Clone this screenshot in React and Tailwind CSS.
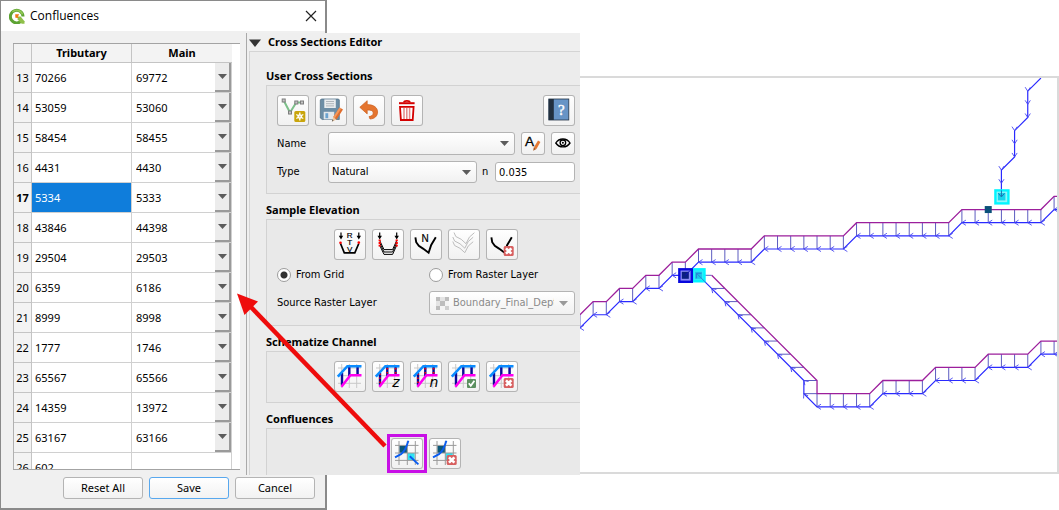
import React from "react";

const ROWS = [
  [13, "70266", "69772"],
  [14, "53059", "53060"],
  [15, "58454", "58455"],
  [16, "4431", "4430"],
  [17, "5334", "5333"],
  [18, "43846", "44398"],
  [19, "29504", "29503"],
  [20, "6359", "6186"],
  [21, "8999", "8998"],
  [22, "1777", "1746"],
  [23, "65567", "65566"],
  [24, "14359", "13972"],
  [25, "63167", "63166"],
  [26, "602", ""],
];

/* ---------- icons, drawn on a 32 x 31 tool button ---------- */

function Icon({ children }) {
  return (
    <svg viewBox="0 0 32 31" className="h-[31px] w-8" aria-hidden="true">
      {children}
    </svg>
  );
}

function Pencil() {
  return (
    <g>
      <path d="M24.5 12.5l3.5 2-6.5 10-3.4-2.2z" fill="#e06c2c" />
      <path d="M24.5 12.5l1.8 1-6.6 10-1.6-1.2z" fill="#f2985c" />
      <path d="M18.1 22.3l3.4 2.2-4.5 2.2z" fill="#f0c9a0" />
      <path d="M17.6 24.6l1 .7-1.8 1.5z" fill="#444" />
    </g>
  );
}

function CrossBadge() {
  return (
    <g>
      <rect x="17.7" y="17" width="10" height="10" rx="1.5" fill="#d75f5f" />
      <path d="M20 19.3l5.4 5.4M25.4 19.3L20 24.7" stroke="#fff" strokeWidth="2.6" />
    </g>
  );
}

const AddLine = () => (
  <Icon>
    <path d="M6.7 5.5L13 17.5L19.3 7.5H25" fill="none" stroke="#7cc08a" strokeWidth="2" />
    {[[6.7, 5.5], [13, 17.5], [19.3, 7.5], [25, 7.5]].map(([x, y]) => (
      <rect key={x} x={x - 1.5} y={y - 1.5} width="3" height="3" fill="#c4c4c4" stroke="#7d7d7d" strokeWidth="1" />
    ))}
    <rect x="17.3" y="16" width="11" height="11" rx="1.5" fill="#c9a50c" />
    <path d="M22.8 17.5v8M19.3 19.5l7 4M26.3 19.5l-7 4" stroke="#fff" strokeWidth="1.3" />
    <circle cx="22.8" cy="21.5" r="2.3" fill="#fff" />
    <circle cx="22.8" cy="21.5" r="1" fill="#e8d27a" />
  </Icon>
);

const Save = () => (
  <Icon>
    <path d="M6.3 4h17.2l.8 1v19.5h-17L5.3 23V5z" fill="#6c8da5" stroke="#557388" strokeWidth=".8" />
    <rect x="9.3" y="4.4" width="11.5" height="8.6" fill="#e9ecee" />
    <path d="M11 6.5h8M11 8.7h8M11 10.9h8" stroke="#a9b0b5" strokeWidth=".9" />
    <rect x="8.7" y="16.8" width="10.5" height="7.6" fill="#e3e7ea" />
    <rect x="10.4" y="18.2" width="2.8" height="5" fill="#6ba2cf" />
    <Pencil />
  </Icon>
);

const Undo = () => (
  <Icon>
    <path
      d="M6.8 12.3L14.2 5.7V9.6C20.8 9.6 24.6 12.6 24.6 17C24.6 21 21.6 23.8 17 24L16 21.6C19 21.2 20.4 19.8 20.2 17.8C20 15.6 18 14.9 14.2 15V18.9Z"
      fill="#e5752f" stroke="#cc5f1e" strokeWidth=".7"
    />
  </Icon>
);

const Trash = () => (
  <Icon>
    <path d="M8 8.2h15.6" stroke="#d40000" strokeWidth="2" />
    <path d="M12.8 7.4c.4-2 5.8-2 6.2 0" fill="none" stroke="#d40000" strokeWidth="1.6" />
    <path d="M9 11.8h13.6l-.9 13.2h-11.8z" fill="#fff" stroke="#d40000" strokeWidth="1.8" />
    <path d="M13 13v11M15.8 13v11M18.6 13v11" stroke="#e38a8a" strokeWidth="1.5" />
  </Icon>
);

const Book = () => (
  <Icon>
    <rect x="5.8" y="4" width="20" height="21" fill="#6794c6" stroke="#243447" strokeWidth=".8" />
    <rect x="5.8" y="4" width="5" height="21" fill="#22303f" />
    <text x="18.4" y="19.5" textAnchor="middle" fontSize="15" fontFamily="Liberation Serif, serif" fill="#fff" stroke="#fff" strokeWidth=".4">?</text>
  </Icon>
);

function DownArrow({ x }) {
  return (
    <g>
      <path d={`M${x} 3.5v5`} stroke="#000" strokeWidth="1.2" />
      <path d={`M${x - 2.2} 6.8h4.4l-2.2 3.6z`} fill="#000" />
    </g>
  );
}

const Rtv = () => (
  <Icon>
    <DownArrow x={7} />
    <DownArrow x={24.8} />
    <path d="M6.5 14.5L10.3 23.8H20.8L24.8 14.5" fill="none" stroke="#000" strokeWidth="1.7" />
    <circle cx="6.5" cy="13.8" r="1.3" fill="#f00" />
    <circle cx="24.8" cy="13.6" r="1.3" fill="#f00" />
    <text fontFamily="Liberation Sans, sans-serif" fontSize="8" textAnchor="middle" stroke="#000" strokeWidth=".2">
      <tspan x="15.6" y="9">R</tspan>
      <tspan x="15.6" y="16">T</tspan>
      <tspan x="15.6" y="22.8">V</tspan>
    </text>
  </Icon>
);

const Stacked = () => (
  <Icon>
    <DownArrow x={7.7} />
    <DownArrow x={24.7} />
    {[0, 2.4, 4.8].map((d) => (
      <path key={d} d={`M7.7 ${11.5 + d}L12 ${20.6 + d}H20.6L24.7 ${11.5 + d}`} fill="none" stroke="#000" strokeWidth="1" />
    ))}
    <path d="M7.7 10.5v7.5M24.7 10.5v7.5" stroke="#f00" strokeWidth="2.2" strokeDasharray="1.8 .8" />
  </Icon>
);

const NaturalN = () => (
  <Icon>
    <path d="M5.4 8.3L6.2 13.2L8.8 16.8L13 19.6L18.6 23.8L21.2 16L25.8 8.3" fill="none" stroke="#000" strokeWidth="1.9" />
    <text x="15.2" y="13" textAnchor="middle" fontFamily="Liberation Sans, sans-serif" fontSize="10" stroke="#000" strokeWidth=".2">N</text>
  </Icon>
);

const Interpolate = () => (
  <Icon>
    {[[6, 0], [4.8, 4.5], [4.8, 9]].map(([x, d]) => (
      <path key={d} d={`M${x} ${3.5 + d}l1.8 4l5.4 2.8l4.8 4.4l3.4 -6.6l5 -4.4`} fill="none" stroke="#bdbdbd" strokeWidth="1" />
    ))}
  </Icon>
);

const RemoveSection = () => (
  <Icon>
    <path d="M5.4 8.3L6.2 13.2L8.8 16.8L13 19.6L18.6 23.8L21.2 16L25.8 8.3" fill="none" stroke="#000" strokeWidth="1.9" />
    <CrossBadge />
  </Icon>
);

function Channel({ dots, letter, children }) {
  return (
    <Icon>
      <path d="M7.7 3v24M15.3 3v24M22.7 3v24M4 7h23M4 14.7h23M4 22.3h23" stroke="#c9c9c9" strokeWidth="1" />
      <path d="M8 12v12M15.3 6v9M23.6 6v8" stroke="#0a0a96" strokeWidth="2.4" />
      {dots && <path d="M8 12.5v10M15.3 7v7.5M23.6 7v7" stroke="#f00" strokeWidth="1.6" strokeDasharray="1.6 2.4" />}
      <path d="M3.8 15.6L13.4 5.2H27.5" fill="none" stroke="#0b8cff" strokeWidth="2.6" />
      <path d="M7.4 25.8L16.4 14.2H27.5" fill="none" stroke="#ff00f0" strokeWidth="2.6" />
      {letter && (
        <text x="24" y="26" textAnchor="middle" fontFamily="DejaVu Sans, sans-serif" fontStyle="italic" fontSize="14">{letter}</text>
      )}
      {children}
    </Icon>
  );
}

function ConfluenceIcon({ children }) {
  return (
    <Icon>
      <rect x="8.3" y="7.6" width="8" height="7.4" fill="#0b5779" />
      <rect x="16.3" y="15" width="7.4" height="7" fill="#2fe3f2" />
      <path d="M8 3v24M16.3 3v24M24.3 3v24M4 7.4h23.5M4 15h23.5M4 22.4h23.5" stroke="#9a9a9a" strokeWidth="1" />
      <path d="M17.4 2.8C15.6 9 13.4 13.6 10 16.2L4 19.4" fill="none" stroke="#0a5cf0" strokeWidth="1.9" />
      {children}
    </Icon>
  );
}

/* ---------- form parts ---------- */

function Tool({ label, children, className = "" }) {
  return (
    <button
      type="button"
      aria-label={label}
      title={label}
      className={`h-[31px] w-8 shrink-0 rounded-[3px] bg-linear-to-b from-white to-[#f1f1f1] shadow-[inset_0_0_0_1px_#b4b4b4] ${className}`}
    >
      {children}
    </button>
  );
}

function Caret({ className = "" }) {
  return (
    <svg viewBox="0 0 9 5" className={`pointer-events-none h-[5px] w-[9px] ${className}`} aria-hidden="true">
      <path d="M0 0h9L4.5 5z" fill="currentColor" />
    </svg>
  );
}

function Section({ title, children, className = "" }) {
  return (
    <section>
      <h3 className="h-[25px] pt-[7px] font-['Noto_Sans',sans-serif] text-[11px] leading-[18px] font-bold">{title}</h3>
      <div className={`border-y border-l border-[#d2d2d2] bg-[#e9e9e9] pt-[9px] pr-[5px] pb-[10px] ${className}`}>
        {children}
      </div>
    </section>
  );
}

/* ---------- left dialog ---------- */

function ConfluenceTable() {
  return (
    <div className="h-[427px] w-[227px] overflow-hidden border-y border-[#a3a3a3] bg-white pr-2">
      <table className="w-full table-fixed border-separate border-spacing-0 border-l border-[#b0b0b0] text-[11px] leading-4">
        <thead>
          <tr className="h-[19px] bg-[#f3f3f3] font-bold">
            <th className="w-[18px] border-r border-b border-[#c4c4c4] p-0"></th>
            <th className="w-[100px] border-r border-b border-[#c4c4c4] p-0">Tributary</th>
            <th className="border-b border-[#c4c4c4] p-0">Main</th>
          </tr>
        </thead>
        <tbody>
          {ROWS.map(([n, tributary, main]) => (
            <tr key={n} className="h-[30px]">
              <th className={`border-r border-b border-[#c4c4c4] bg-[#f3f3f3] p-0 ${n === 17 ? "font-bold" : "font-normal"}`}>{n}</th>
              <td className={`border-r border-b border-[#d0d0d0] py-0 pr-0 pl-[3px] ${n === 17 ? "bg-[#0f7ddb] text-white" : ""}`}>
                {tributary}
              </td>
              <td className="border-r border-b border-[#d0d0d0] p-0">
                {main && (
                  <div className="grid h-[29px] grid-cols-[1fr_16px]">
                    <select
                      aria-label={`Main for row ${n}`}
                      className="col-span-2 col-start-1 row-start-1 w-full appearance-none bg-transparent pl-1"
                    >
                      <option>{main}</option>
                    </select>
                    <span className="pointer-events-none col-start-2 row-start-1 flex items-center justify-center border-r-2 border-b-2 border-[#9a9a9a] bg-[#ececec] text-[#5c5c5c]">
                      <Caret className="h-1 w-[7px]" />
                    </span>
                  </div>
                )}
              </td>
            </tr>
          ))}
        </tbody>
      </table>
    </div>
  );
}

function ConfluencesDialog() {
  const button = "h-[22px] w-20 rounded-[3px] border bg-linear-to-b from-white to-[#f2f2f2] text-[11px] leading-4";
  return (
    <div className="flex w-[327px] shrink-0 flex-col border border-r-2 border-b-2 border-[#8a8a8a] bg-[#f0f0f0]">
      <header className="flex h-[30px] items-center bg-white pr-2 pl-2">
        <svg viewBox="0 0 16 16" className="h-4 w-4" aria-hidden="true">
          <path d="M12.6 12.6A6.3 6.3 0 1 1 14 8.6" fill="none" stroke="#5da333" strokeWidth="3" />
          <path d="M3.4 4A6.3 6.3 0 0 1 13.6 6.4" fill="none" stroke="#93c855" strokeWidth="1.6" />
          <path d="M8.6 8.4h3l3.9 4.8v2.6h-2.8L8.6 11.5z" fill="#8fc04a" />
          <path d="M6.2 6.2h4L8.8 8.8L10 10L6.4 9.8z" fill="#ee7913" />
        </svg>
        <h1 className="pl-[5px] font-['Open_Sans',sans-serif] text-[12px]">Confluences</h1>
        <button type="button" aria-label="Close" className="ml-auto">
          <svg viewBox="0 0 12 12" className="h-3 w-3" aria-hidden="true">
            <path d="M1 1l10 10M11 1L1 11" stroke="#222" strokeWidth="1.2" />
          </svg>
        </button>
      </header>
      <div className="pt-3 pl-3">
        <ConfluenceTable />
      </div>
      <footer className="flex justify-end gap-[6px] pt-[7px] pr-[10px] pb-[9px]">
        <button type="button" className={`${button} border-[#b4b4b4]`}>Reset All</button>
        <button type="button" className={`${button} border-[#58a8ee]`}>Save</button>
        <button type="button" className={`${button} border-[#b4b4b4]`}>Cancel</button>
      </footer>
    </div>
  );
}

/* ---------- cross sections panel ---------- */

const combo =
  "w-full appearance-none rounded-[3px] border border-[#b4b4b4] bg-linear-to-b from-white to-[#f1f1f1] pl-[3px]";

function EditorPanel() {
  return (
    <div className="relative -ml-[81px] mt-[33px] flex h-[442px] w-[334px] shrink-0 flex-col overflow-hidden border-l border-[#a9a9a9] bg-[#efefef] pl-[2px] font-['DejaVu_Sans_Condensed','Noto_Sans',sans-serif] text-[11px] leading-4">
      <h2 className="flex h-[18px] shrink-0 items-center font-['Noto_Sans',sans-serif] text-[11px] font-bold">
        <svg viewBox="0 0 12 8" className="mt-[2px] h-2 w-3" aria-hidden="true">
          <path d="M0 .5h12L6 8z" fill="#333" />
        </svg>
        <span className="pl-[7px]">Cross Sections Editor</span>
      </h2>
      <div className="grow border-t border-l border-[#d4d4d4] bg-[#ececec] pt-2 pl-4">
        <Section title="User Cross Sections" className="flex flex-col gap-[6px] pl-[10px]">
          <div className="flex gap-[6px]">
            <Tool label="Add cross section"><AddLine /></Tool>
            <Tool label="Save changes"><Save /></Tool>
            <Tool label="Revert changes"><Undo /></Tool>
            <Tool label="Delete cross section"><Trash /></Tool>
            <Tool label="Help" className="ml-auto"><Book /></Tool>
          </div>
          <div className="flex items-center">
            <label htmlFor="xs-name" className="w-[51px]">Name</label>
            <div className="relative flex grow items-center">
              <select id="xs-name" className={`${combo} h-[23px]`}><option></option></select>
              <Caret className="absolute right-[6px] text-[#5c5c5c]" />
            </div>
            <Tool label="Rename" className="ml-[6px] h-[23px]! w-6!">
              <svg viewBox="0 0 24 23" className="h-[23px] w-6" aria-hidden="true">
                <text x="8.4" y="14" textAnchor="middle" fontFamily="Liberation Sans, sans-serif" fontSize="13.5" stroke="#000" strokeWidth=".3">A</text>
                <path d="M17 8.5l2.4 1.4-4 7-2.6-1.5z" fill="#e57a35" />
                <path d="M12.8 15.4l2.6 1.5-3.2 1.9z" fill="#a8561f" />
              </svg>
            </Tool>
            <Tool label="Show" className="ml-[6px] h-[23px]! w-6!">
              <svg viewBox="0 0 24 23" className="h-[23px] w-6" aria-hidden="true">
                <path d="M4.8 11c3.4-5.4 10.8-5.4 14.2 0c-3.4 5.2-10.8 5.2-14.2 0z" fill="#fff" stroke="#000" strokeWidth="1.4" />
                <circle cx="11.9" cy="10.8" r="2.8" fill="#fff" stroke="#000" strokeWidth="1.3" />
                <circle cx="11.9" cy="10.8" r="1" fill="#000" />
              </svg>
            </Tool>
          </div>
          <div className="flex items-center">
            <label htmlFor="xs-type" className="w-[51px]">Type</label>
            <div className="relative flex grow items-center">
              <select id="xs-type" className={`${combo} h-[22px]`}><option>Natural</option></select>
              <Caret className="absolute right-[6px] text-[#5c5c5c]" />
            </div>
            <label htmlFor="xs-n" className="w-[18px] pl-[5px]">n</label>
            <input id="xs-n" defaultValue="0.035" className="h-5 w-20 rounded-[3px] border border-[#b4b4b4] bg-white pl-[3px]" />
          </div>
        </Section>

        <Section title="Sample Elevation" className="pl-[10px]">
          <div className="flex gap-[6px] pl-[57px]">
            <Tool label="Rectangular, trapezoidal and V"><Rtv /></Tool>
            <Tool label="Sample all prismatic"><Stacked /></Tool>
            <Tool label="Sample natural"><NaturalN /></Tool>
            <Tool label="Interpolate"><Interpolate /></Tool>
            <Tool label="Remove sampled section"><RemoveSection /></Tool>
          </div>
          <div className="grid grid-cols-[152px_1fr] pt-2">
            {["From Grid", "From Raster Layer"].map((name, i) => (
              <label key={name} className="flex h-[14px] items-center gap-[5px]">
                <input
                  type="radio"
                  name="elevation"
                  defaultChecked={i === 0}
                  className="h-[14px] w-[14px] appearance-none rounded-full border border-[#9c9c9c] bg-white checked:bg-[radial-gradient(circle,#333_3px,#fff_4px)]"
                />
                {name}
              </label>
            ))}
          </div>
          <div className="grid grid-cols-[152px_1fr] items-center pt-[9px]">
            <label htmlFor="raster">Source Raster Layer</label>
            <div className="relative flex items-center">
              <select id="raster" disabled className={`${combo} h-6 pr-5 pl-[23px]! text-[#8a8a8a] opacity-100`}>
                <option>Boundary_Final_Depth</option>
              </select>
              <svg viewBox="0 0 13 13" className="pointer-events-none absolute left-[7px] h-[13px] w-[13px]" aria-hidden="true">
                <path d="M0 0h13v13H0z" fill="#e4e4e4" />
                <path d="M0 0h4v4H0zM9 0h4v4H9zM4 4h5v5H4zM0 9h4v4H0z" fill="#bdbdbd" />
                <path d="M9 4h4v5H9zM4 9h5v4H4z" fill="#f4f4f4" />
                <path d="M9 9h4v4H9z" fill="#cfcfcf" />
              </svg>
              <Caret className="absolute right-[7px] text-[#9a9a9a]" />
            </div>
          </div>
        </Section>

        <Section title="Schematize Channel" className="flex gap-[6px] pl-[67px]">
          <Tool label="Schematize"><Channel /></Tool>
          <Tool label="Assign elevations"><Channel dots letter="z" /></Tool>
          <Tool label="Assign roughness"><Channel dots letter="n" /></Tool>
          <Tool label="Confirm schematization">
            <Channel>
              <rect x="19" y="18" width="9" height="9" rx="1" fill="#5c9060" />
              <path d="M20.8 22.2l2 2.6l3.6-5" fill="none" stroke="#fff" strokeWidth="1.8" />
            </Channel>
          </Tool>
          <Tool label="Delete schematization"><Channel><CrossBadge /></Channel></Tool>
        </Section>

        <Section title="Confluences" className="flex gap-[6px] pl-[124px]">
          <div className="flex outline-[3px] outline-offset-1 outline-[#c80fe6]">
            <Tool label="Edit confluences">
              <ConfluenceIcon>
                <path d="M18.8 18.2L27.4 26.4" stroke="#0a5cf0" strokeWidth="1.9" />
              </ConfluenceIcon>
            </Tool>
          </div>
          <Tool label="Delete confluences"><ConfluenceIcon><CrossBadge /></ConfluenceIcon></Tool>
        </Section>
      </div>
    </div>
  );
}

/* ---------- map ---------- */

// Grid cells are 13.17 units wide; node (0, 0) sits at (118.5, 172).
const px = (i) => 118.5 + i * 13.17;
const py = (j) => 172 + j * 13.15;
const line = (nodes) => nodes.map(([i, j]) => `${px(i)},${py(j)}`).join(" ");

const UPPER = [[-9, 5], [-8, 4], [-7, 4], [-6, 3], [-5, 3], [-4, 2], [-3, 2], [-2, 1], [-1, 1], [0, 0], [4, 0], [5, -1], [11, -1], [12, -2], [19, -2], [20, -3], [26, -3], [27, -4], [28, -4]];
const LOWER = [[9, 11], [13, 11], [14, 10], [17, 10], [18, 9], [21, 9], [22, 8], [25, 8], [26, 7], [28, 7]];
const SIDE = [[26, -13], [25, -12], [25, -11], [25, -10], [24, -9], [24, -8], [24, -7], [23, -6], [23, -5], [23, -4]];
const DIAGONAL = [0, 1, 2, 3, 4, 5, 6, 7, 8];

function everyNode(nodes) {
  const out = [];
  nodes.forEach(([i, j], k) => {
    out.push([i, j]);
    const next = nodes[k + 1];
    if (next) for (let m = i + 1; m < next[0]; m += 1) out.push([m, j]);
  });
  return out;
}

const down = (nodes) => nodes.map(([i, j]) => [i, j + 1]);

function Tick({ at: [i, j], turn = 0 }) {
  return <path d="M4 -2.6L0 0L4 2.6" transform={`translate(${px(i)} ${py(j)}) rotate(${turn})`} />;
}

function MapCanvas() {
  const cells = [...everyNode(UPPER), ...everyNode(LOWER)];
  return (
    <div className="mt-[76px] h-[398px] min-w-0 grow overflow-hidden border-y-2 border-r-2 border-[#dadada] bg-white">
      <svg viewBox="0 1 477 394" className="h-[394px] w-[477px]" fill="none" role="img" aria-label="Channel map">
        <g stroke="#5c5cc0" strokeWidth="1">
          {cells.map(([i, j]) => <path key={`${i} ${j}`} d={`M${px(i)} ${py(j)}V${py(j + 1)}`} />)}
          {DIAGONAL.map((k) => <path key={k} d={`M${px(k)} ${py(k + 2)}H${px(k + 1)}`} />)}
          <path d={`M${px(8)} ${py(11)}H${px(9)}`} />
        </g>
        <g stroke="#2a2aff" strokeWidth="1.2">
          <polyline points={line(down(UPPER))} />
          <polyline points={line([[0, 2], [8, 10], [8, 11], ...down(LOWER)])} />
          <polyline points={line(SIDE)} />
        </g>
        <g stroke="#4848f0" strokeWidth=".9">
          {down(cells).map((n) => <Tick key={n.join()} at={n} />)}
          {DIAGONAL.map((k) => <Tick key={k} at={[k, k + 2]} turn={45} />)}
          <Tick at={[8, 11]} turn={60} />
          {SIDE.slice(1).map((n) => <Tick key={n.join()} at={n} turn={-90} />)}
        </g>
        <g stroke="#9c1f9c" strokeWidth="1.3">
          <polyline points={line(UPPER)} />
          <polyline points={line([[1, 2], [9, 10], ...LOWER])} />
        </g>
        <rect x={px(22) - 3.5} y={py(-3) - 3.5} width="7" height="7" fill="#0b5079" />
        <rect x={px(0) - 6} y={py(2) - 6} width="12" height="12" fill="#30eaf8" stroke="#00f6ff" strokeWidth="2.4" />
        <rect x={px(0) - 3.5} y={py(2) - 3.5} width="7" height="7" fill="#18c6e8" />
        <path d={`M${px(0) - 2} ${py(2) + 3}V${py(2) - 2}h5M${px(0) - 2} ${py(2) - 2}l9 9`} stroke="#2d7fd8" />
        <rect x={px(-1) - 6} y={py(2) - 6} width="12.5" height="12.5" fill="#8c8cf4" stroke="#0808dd" strokeWidth="2.4" />
        <rect x={px(-1) - 3.5} y={py(2) - 3.5} width="7" height="7" fill="#0a1f80" />
        <path d={`M${px(-1)} ${py(2)}l5-5`} stroke="#1010c0" />
        <rect x={px(23) - 6} y={py(-4) - 6} width="13" height="13" fill="#8ff6fa" stroke="#00f6ff" strokeWidth="2.4" />
        <rect x={px(23) - 3.5} y={py(-4) - 3.5} width="7.5" height="7.5" fill="#16d5ec" />
        <path d={`M${px(23) - 3} ${py(-4) - 3}l3 3.5l3-3.5M${px(23)} ${py(-4) - 6}v6`} stroke="#1c6fb0" />
      </svg>
    </div>
  );
}

export default function App() {
  return (
    <main className="relative flex min-h-[510px] items-stretch overflow-hidden bg-white font-['Noto_Sans',sans-serif] text-black">
      <ConfluencesDialog />
      <EditorPanel />
      <MapCanvas />
      <svg viewBox="0 0 160 164" className="pointer-events-none absolute top-[290px] left-[232px] h-[164px] w-40" aria-hidden="true">
        <path d="M153 156L16 14" stroke="#ee0c0c" strokeWidth="4.5" />
        <path d="M5 3.5L26 11.5L12.5 25Z" fill="#ee0c0c" />
      </svg>
    </main>
  );
}
